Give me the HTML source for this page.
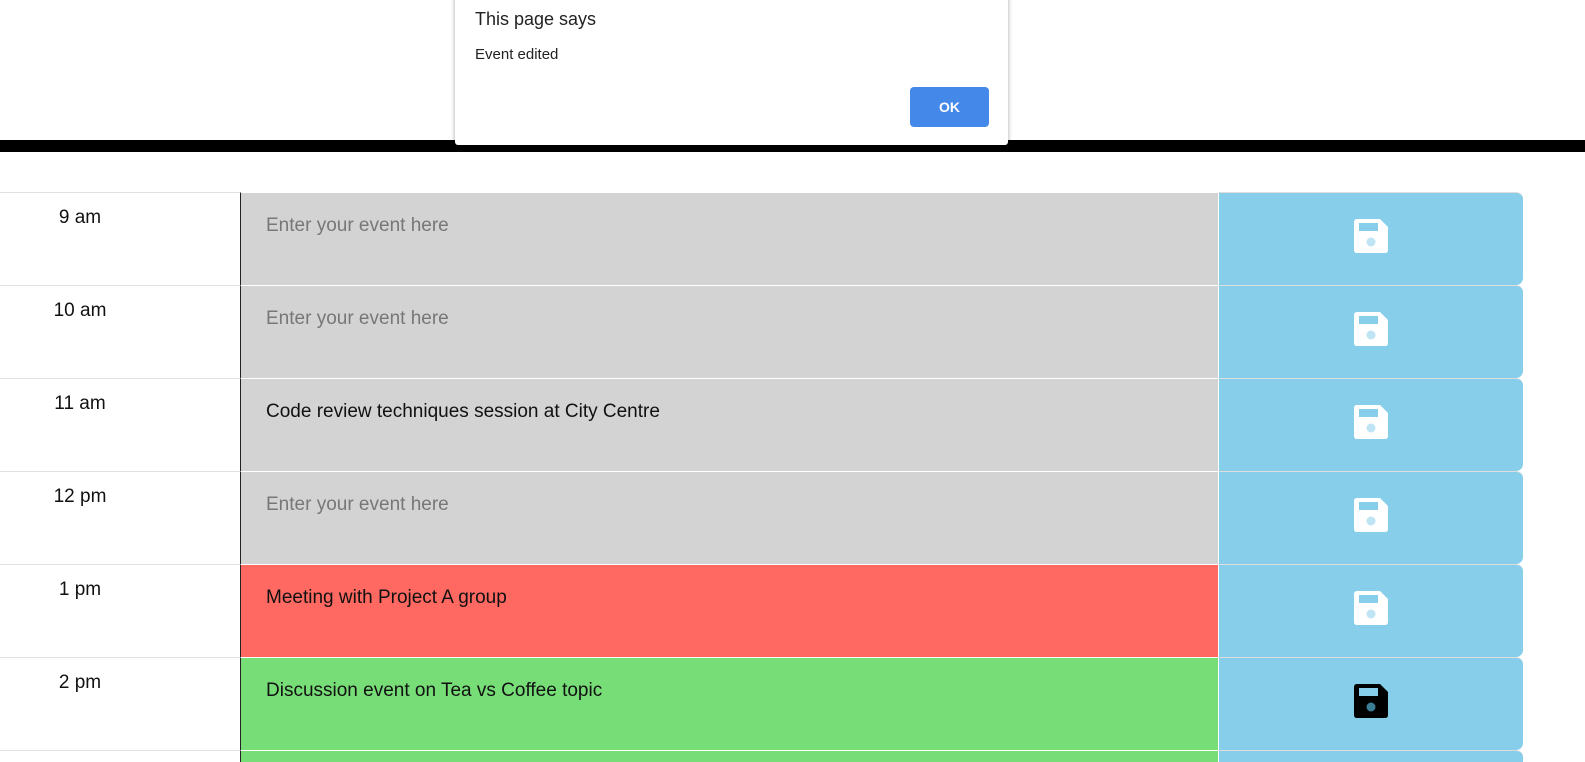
<!DOCTYPE html>
<html style="height:762px;overflow:hidden"><head><style>
body{margin:0;width:1585px;height:762px;overflow:hidden;background:#fff;font-family:"Liberation Sans",sans-serif;position:relative}
.bar{position:absolute;left:0;top:140px;width:1585px;height:12px;background:#000}
.row{position:absolute;left:0;width:1585px;height:93px;overflow:hidden}
.hr{position:absolute;left:0;top:0;width:240px;height:93px;border-top:1px solid #dee2e6;box-sizing:border-box;font-size:19px;color:#111}
.hr span{position:absolute;left:0;width:160px;top:14px;text-align:center}
.ta{position:absolute;left:240px;top:0;width:978px;height:93px;border-left:1px solid #222;border-top:1px solid #fff;box-sizing:border-box;background:#d3d3d3;font-size:19px;padding:22px 0 0 25px;color:#111}
.ta.ph{color:#777}
.btn{position:absolute;left:1219px;top:0;width:304px;height:92px;background:#87ceeb;border-top:1px solid #ddd;border-radius:0 7px 7px 0}
.btn svg{position:absolute;left:135px;top:26px}
.dlg{position:absolute;left:455px;top:-5px;width:553px;height:150px;background:#fff;border-radius:0 0 3px 3px;box-shadow:0 1px 5px rgba(0,0,0,.35)}
.ok{position:absolute;left:455px;top:92px;width:79px;height:40px;background:#4489ea;border-radius:4px;color:#fff;font-weight:bold;font-size:14px;text-align:center;line-height:40px}
</style></head><body>
<div class="bar"></div>
<div class="dlg">
<div style="position:absolute;left:20px;top:14px;font-size:18px;color:#222">This page says</div>
<div style="position:absolute;left:20px;top:51px;font-size:15px;color:#222">Event edited</div>
<div class="ok">OK</div>
</div>

<div class="row" style="top:192px"><div class="hr"><span>9 am</span></div><div class="ta ph">Enter your event here</div><div class="btn"><svg width="34" height="34" viewBox="0 0 34 34"><path d="M3 0H26L34 8V31Q34 34 31 34H3Q0 34 0 31V3Q0 0 3 0Z" fill="#fff"/><rect x="5" y="4" width="19" height="8" fill="#87ceeb"/><circle cx="17" cy="23" r="4.5" fill="#bfe5f5"/></svg></div></div>
<div class="row" style="top:285px"><div class="hr"><span>10 am</span></div><div class="ta ph">Enter your event here</div><div class="btn"><svg width="34" height="34" viewBox="0 0 34 34"><path d="M3 0H26L34 8V31Q34 34 31 34H3Q0 34 0 31V3Q0 0 3 0Z" fill="#fff"/><rect x="5" y="4" width="19" height="8" fill="#87ceeb"/><circle cx="17" cy="23" r="4.5" fill="#bfe5f5"/></svg></div></div>
<div class="row" style="top:378px"><div class="hr"><span>11 am</span></div><div class="ta">Code review techniques session at City Centre</div><div class="btn"><svg width="34" height="34" viewBox="0 0 34 34"><path d="M3 0H26L34 8V31Q34 34 31 34H3Q0 34 0 31V3Q0 0 3 0Z" fill="#fff"/><rect x="5" y="4" width="19" height="8" fill="#87ceeb"/><circle cx="17" cy="23" r="4.5" fill="#bfe5f5"/></svg></div></div>
<div class="row" style="top:471px"><div class="hr"><span>12 pm</span></div><div class="ta ph">Enter your event here</div><div class="btn"><svg width="34" height="34" viewBox="0 0 34 34"><path d="M3 0H26L34 8V31Q34 34 31 34H3Q0 34 0 31V3Q0 0 3 0Z" fill="#fff"/><rect x="5" y="4" width="19" height="8" fill="#87ceeb"/><circle cx="17" cy="23" r="4.5" fill="#bfe5f5"/></svg></div></div>
<div class="row" style="top:564px"><div class="hr"><span>1 pm</span></div><div class="ta" style="background:#ff6961">Meeting with Project A group</div><div class="btn"><svg width="34" height="34" viewBox="0 0 34 34"><path d="M3 0H26L34 8V31Q34 34 31 34H3Q0 34 0 31V3Q0 0 3 0Z" fill="#fff"/><rect x="5" y="4" width="19" height="8" fill="#87ceeb"/><circle cx="17" cy="23" r="4.5" fill="#bfe5f5"/></svg></div></div>
<div class="row" style="top:657px"><div class="hr"><span>2 pm</span></div><div class="ta" style="background:#77dd77">Discussion event on Tea vs Coffee topic</div><div class="btn"><svg width="34" height="34" viewBox="0 0 34 34"><path d="M3 0H26L34 8V31Q34 34 31 34H3Q0 34 0 31V3Q0 0 3 0Z" fill="#000"/><rect x="5" y="4" width="19" height="8" fill="#87ceeb"/><circle cx="17" cy="23" r="4.5" fill="#3a7d95"/></svg></div></div>
<div class="row" style="top:750px;height:12px"><div class="hr"></div><div class="ta" style="background:#77dd77"></div><div class="btn"></div></div>
</body></html>
